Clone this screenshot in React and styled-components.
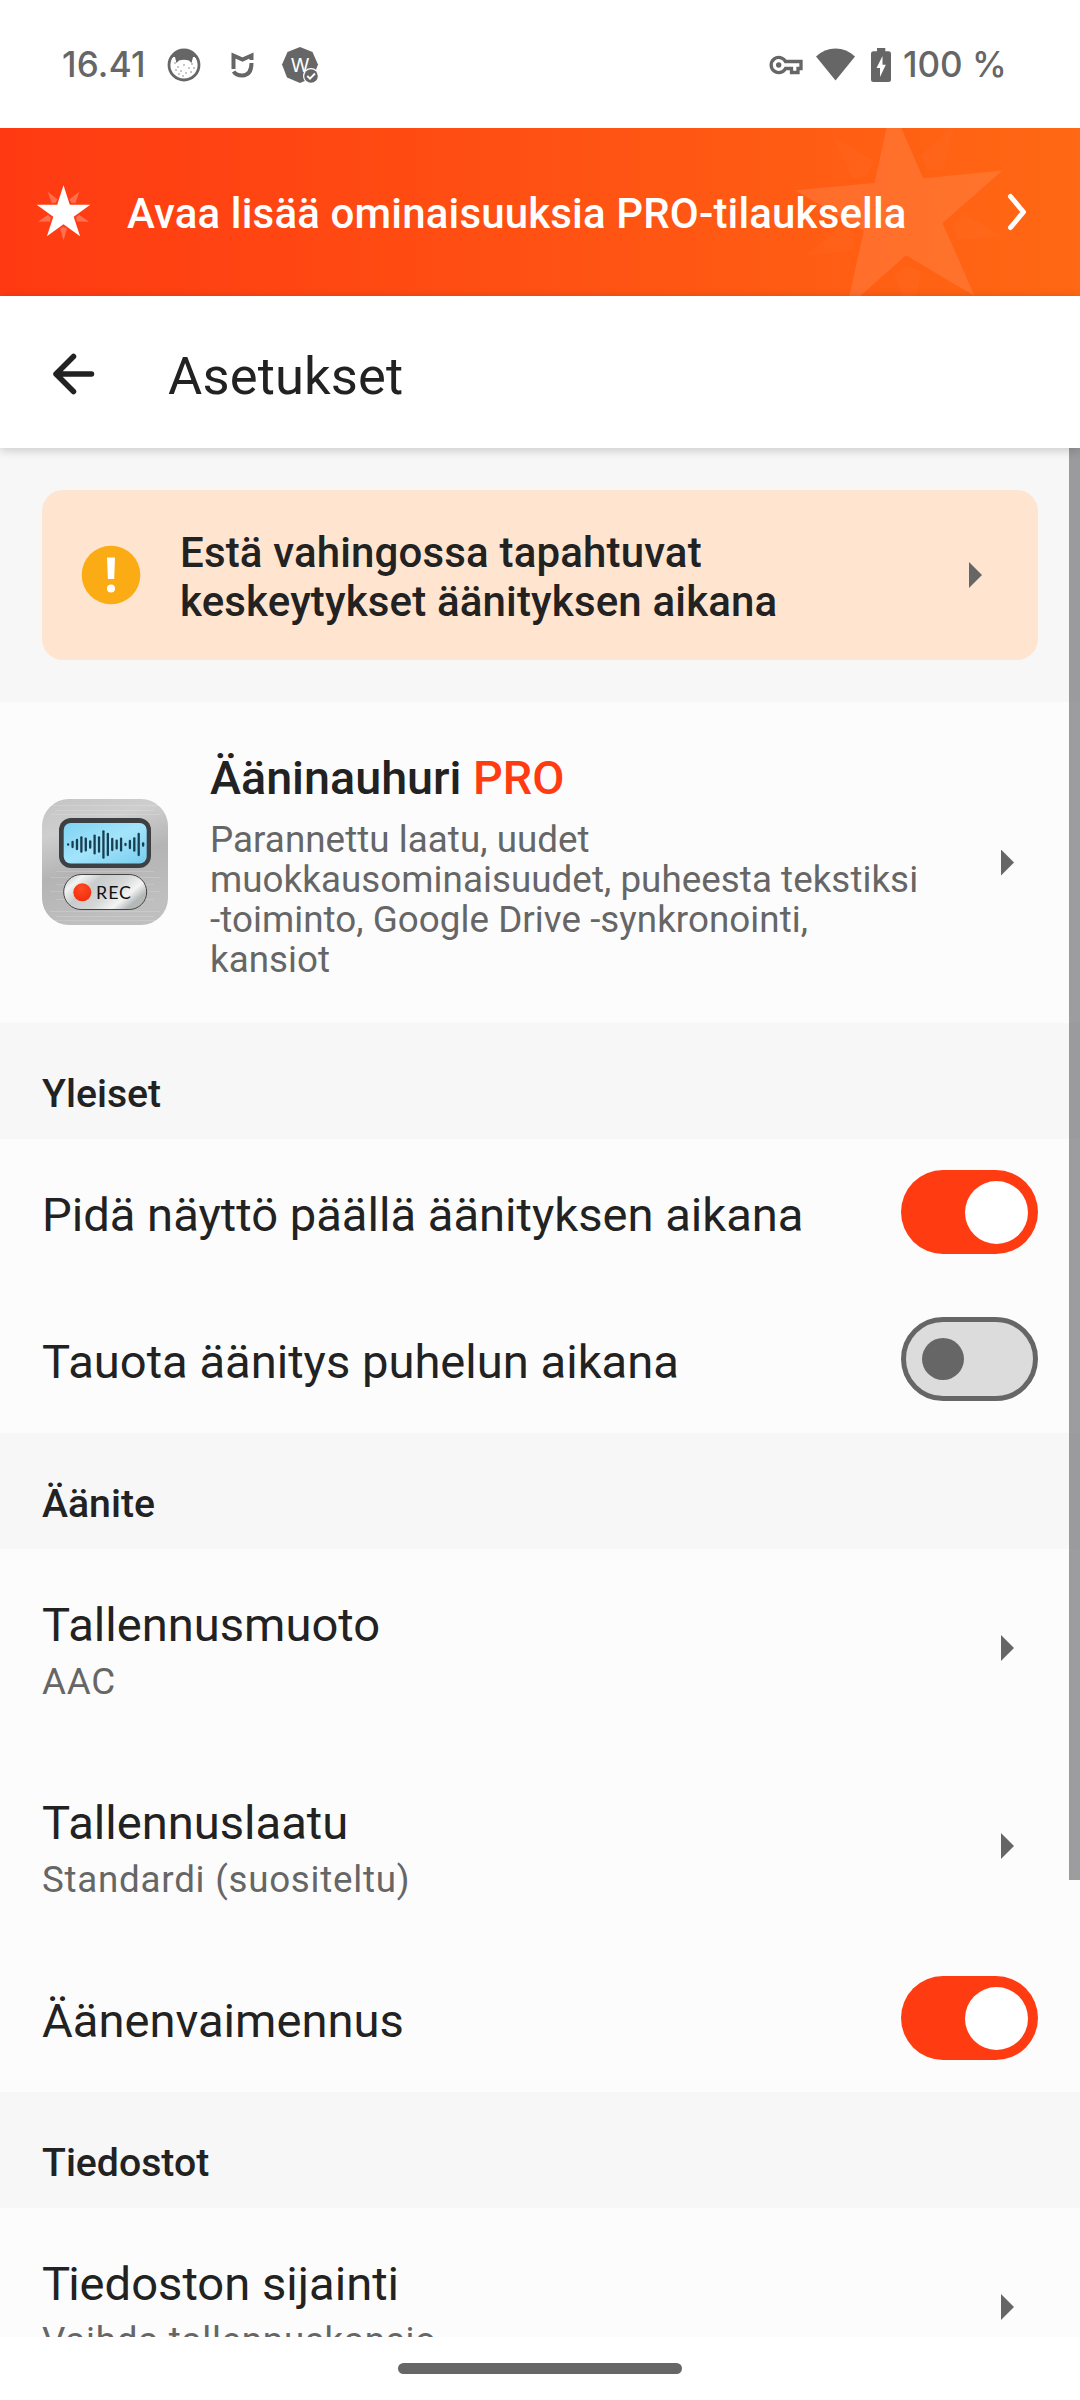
import React from "react";
import styled, { createGlobalStyle, css } from "styled-components";

const colors = {
  accent: "#ff3b12",
  ink: "#222222",
  muted: "#666666",
  surface: "#fcfcfc",
  canvas: "#f7f7f7",
};

const GlobalStyle = createGlobalStyle`
  *, *::before, *::after { box-sizing: border-box; }
  body { margin: 0; background: #fff; }
  svg { display: block; flex: none; }
`;

const Screen = styled.div`
  width: 1080px;
  height: 2400px;
  display: flex;
  flex-direction: column;
  overflow: hidden;
  background: #fff;
  color: ${colors.ink};
  font-family: Roboto, sans-serif;
`;

const StatusBar = styled.header`
  flex: none;
  height: 128px;
  padding: 1px 76px 0 62px;
  display: flex;
  align-items: center;
  justify-content: space-between;
  color: ${colors.muted};
  font: 500 35px/40px Inter, sans-serif;
`;

const StatusGroup = styled.div`
  display: flex;
  align-items: center;
`;

const Clock = styled.span`
  width: 106px;
  padding-bottom: 1px;
  letter-spacing: 0.2px;
`;

const BatteryLevel = styled.span`
  width: 101px;
  margin-left: 12px;
  padding-bottom: 2px;
  white-space: nowrap;
`;

const StatusIcon = styled.span`
  margin-left: ${(p) => p.$gap}px;
`;

const Banner = styled.button`
  position: relative;
  flex: none;
  height: 168px;
  border: 0;
  padding: 0 52px 0 35px;
  display: flex;
  align-items: center;
  overflow: hidden;
  color: #fff;
  text-align: left;
  background: linear-gradient(90deg, #ff3a12, #ff6814);
  font: 500 42px/50px Roboto, sans-serif;
  letter-spacing: 0.16px;
`;

const BannerStar = styled.svg`
  position: absolute;
  left: 782px;
  top: -34px;
`;

const StarMark = styled.svg`
  margin-top: 3px;
`;

const BannerText = styled.span`
  position: relative;
  flex: 1;
  padding: 3px 0 0 34px;
  white-space: nowrap;
`;

const BannerChevron = styled.svg`
  position: relative;
`;

const Toolbar = styled.div`
  position: relative;
  z-index: 2;
  flex: none;
  height: 152px;
  padding: 0 50px;
  display: flex;
  align-items: center;
  gap: 70px;
  background: #fff;
  box-shadow: 0 2px 10px rgba(0, 0, 0, 0.2);
`;

const Title = styled.h1`
  margin: 0;
  padding-top: 8px;
  font-weight: 400;
  font-size: 52.5px;
  line-height: 62px;
  letter-spacing: 0.15px;
`;

const BackArrow = styled.svg`
  margin-top: 4px;
`;

const Content = styled.main`
  position: relative;
  flex: none;
  height: 1889px;
  overflow: hidden;
  background: ${colors.surface};
`;

const ScrollThumb = styled.div`
  position: absolute;
  top: 0;
  right: 0;
  width: 11px;
  height: 1432px;
  background: rgba(93, 91, 97, 0.6);
`;

const NoticeArea = styled.div`
  height: 254px;
  padding: 42px;
  background: ${colors.canvas};
`;

const Notice = styled.div`
  height: 170px;
  padding: 0 56px 0 39px;
  border-radius: 21px;
  background: #ffe5cf;
  display: flex;
  align-items: center;
`;

const NoticeText = styled.p`
  flex: 1;
  margin: 0;
  padding: 3px 100px 0 39px;
  font-weight: 500;
  font-size: 42px;
  line-height: 49px;
  letter-spacing: 0.16px;
`;

const Arrow = styled.i`
  flex: none;
  width: 13px;
  height: 26px;
  background: ${colors.muted};
  clip-path: polygon(0 0, 100% 50%, 0 100%);
`;

const Row = styled.div`
  height: ${(p) => p.$height}px;
  padding: 0 ${(p) => (p.$link ? 66 : 42)}px 0 42px;
  display: flex;
  align-items: center;
  background: ${colors.surface};
`;

const RowText = styled.div`
  flex: 1;
  min-width: 0;
  padding-top: ${(p) => p.$shift}px;
`;

const RowTitle = styled.div`
  font-size: 47.150px;
  line-height: 56px;
  white-space: nowrap;
  ${(p) =>
    p.$kern &&
    css`
      &::first-letter {
        letter-spacing: -2px;
      }
    `}
  ${(p) =>
    p.$strong &&
    css`
      font-size: 46.7px;
      font-weight: 500;
    `}
`;

const Pro = styled.span`
  color: ${colors.accent};
`;

const RowValue = styled.div`
  color: ${colors.muted};
  font-size: 36.75px;
  line-height: 57px;
  letter-spacing: 0.74px;
  white-space: nowrap;
`;

const ProRow = styled(Row)`
  ${RowText} {
    align-self: flex-start;
    padding: 48px 60px 0 42px;
  }
`;

const ProDescription = styled.p`
  margin: 14px 0 0;
  width: 740px;
  color: ${colors.muted};
  font-size: 36.75px;
  line-height: 40px;
  letter-spacing: 0.05px;
`;

const SectionHeader = styled.h2`
  margin: 0;
  height: 116px;
  padding: 48px 42px 0;
  background: ${colors.canvas};
  font-weight: 500;
  font-size: 39.2px;
  line-height: 46px;
`;

const Track = styled.div`
  flex: none;
  width: 137px;
  height: 84px;
  margin-bottom: 1px;
  border-radius: 42px;
  display: flex;
  align-items: center;
  ${(p) =>
    p.$on
      ? css`
          justify-content: flex-end;
          padding-right: 10px;
          background: ${colors.accent};
        `
      : css`
          padding-left: 16px;
          border: 5px solid ${colors.muted};
          background: #dcdcdc;
        `}
`;

const Thumb = styled.div`
  width: ${(p) => (p.$on ? 63 : 42)}px;
  height: ${(p) => (p.$on ? 63 : 42)}px;
  border-radius: 50%;
  background: ${(p) => (p.$on ? "#fff" : colors.muted)};
`;

const NavBar = styled.footer`
  flex: 1;
  padding-top: 26px;
  display: flex;
  justify-content: center;
  background: #fff;
`;

const HomePill = styled.div`
  width: 284px;
  height: 11px;
  border-radius: 6px;
  background: ${colors.muted};
`;

const starPoints = Array.from({ length: 10 }, (_, i) => {
  const r = i % 2 ? 10.7 : 28.2;
  const a = (Math.PI / 5) * i - Math.PI / 2;
  return `${(r * Math.cos(a)).toFixed(2)},${(r * Math.sin(a)).toFixed(2)}`;
}).join(" ");

function Burst({ star, ray }) {
  return (
    <g fill="#fff">
      <polygon points={starPoints} opacity={star} />
      {[0, 72, 144, 216, 288].map((a) => (
        <polygon
          key={a}
          points="0,13.3 3.5,15.2 0,26.8 -3.5,15.2"
          transform={`rotate(${a})`}
          opacity={ray}
        />
      ))}
    </g>
  );
}

function CatIcon() {
  return (
    <svg width="34" height="34" viewBox="0 0 34 34">
      <circle cx="17" cy="17" r="15" fill="#fff" stroke="#666" strokeWidth="2.8" />
      <path
        d="M3.500 12 Q7 3 17 2.500 Q27 3 30.500 12 L28 9 L26 9 L24.500 15 L22 12.500 Q17 11 12 12.500 L9.500 15 L8 9 L6 9 Z"
        fill="#666"
      />
      {[
        [11, 19], [17, 17], [22, 20], [8, 15], [14, 23], [19, 25], [25, 16], [9, 22], [24, 24], [16, 28], [27, 20], [12, 26],
      ].map(([x, y]) => (
        <circle key={`${x}-${y}`} cx={x} cy={y} r="0.7" fill="#666" />
      ))}
    </svg>
  );
}

function MiHomeIcon() {
  return (
    <svg width="23" height="26" viewBox="0 0 23 26" fill="none" stroke="#666" strokeWidth="4">
      <path d="M2.500 17 V3.500 L11.500 7.500 L20.500 3.500 V8" />
      <path d="M2.600 19.500 Q5 23.500 11.300 23.500 Q20.500 23 20.500 11" />
    </svg>
  );
}

function WorkBadgeIcon() {
  return (
    <svg width="38" height="38" viewBox="0 0 38 38">
      <path d="M19 1 L31.500 6 L37 18.500 L32 31.500 L19 37 L6 31.500 L1 18.500 L6.500 6 Z" fill="#666" />
      <text x="19" y="25.500" textAnchor="middle" fontFamily="Inter, sans-serif" fontSize="19" fontWeight="400" fill="#fff">
        W
      </text>
      <circle cx="30" cy="30" r="8" fill="#fff" />
      <circle cx="30" cy="30" r="6.800" fill="#666" />
      <path d="M26.300 30 L29 32.700 L34 27.500" fill="none" stroke="#fff" strokeWidth="1.900" />
    </svg>
  );
}

function KeyIcon() {
  return (
    <svg width="34" height="20" viewBox="0 0 34 20" fill="none" stroke="#666">
      <path
        d="M16.500 6.500 H32 V13.500 H29 V17.500 H22.500 V13.500 H16.500 A7.600 7.600 0 1 1 16.500 6.500 Z"
        strokeWidth="3.300"
      />
      <circle cx="9.700" cy="10" r="2.700" fill="#666" stroke="none" />
    </svg>
  );
}

function WifiIcon() {
  return (
    <svg width="39" height="33" viewBox="0 0 39 33">
      <path d="M0 8.500 Q8.500 0.500 19.500 0.500 Q30.500 0.500 39 8.500 L19.500 32.500 Z" fill="#666" />
    </svg>
  );
}

function BatteryIcon() {
  return (
    <svg width="20" height="34" viewBox="0 0 20 34">
      <path
        d="M6 0 H14.300 V3.200 H17.500 Q20 3.200 20 5.700 V31.500 Q20 34 17.500 34 H2.500 Q0 34 0 31.500 V5.700 Q0 3.200 2.500 3.200 H6 Z"
        fill="#666"
      />
      <path d="M11.500 8 L5.500 20 H9 V29 L14.800 16.800 H11.500 Z" fill="#fff" />
    </svg>
  );
}

const WAVE = [8, 22, 34, 50, 42, 26, 60, 50, 86, 70, 40, 30, 42, 10, 28, 44, 70, 14];

const AppIcon = styled.svg`
  margin-bottom: 1px;
`;

function RecorderIcon() {
  return (
    <AppIcon width="126" height="126" viewBox="0 0 126 126">
      <defs>
        <linearGradient id="metal" x1="0" y1="0" x2="0.3" y2="1">
          <stop offset="0" stopColor="#c4c4c4" />
          <stop offset="0.28" stopColor="#cecece" />
          <stop offset="0.6" stopColor="#b4b4b4" />
          <stop offset="1" stopColor="#bfbfbf" />
        </linearGradient>
        <linearGradient id="lcd" x1="0" y1="0" x2="1" y2="1">
          <stop offset="0" stopColor="#7fd3f2" />
          <stop offset="0.5" stopColor="#a3e4fb" />
          <stop offset="1" stopColor="#78cdee" />
        </linearGradient>
        <linearGradient id="pill" x1="0" y1="0" x2="1" y2="0.5">
          <stop offset="0" stopColor="#b9bcbc" />
          <stop offset="0.2" stopColor="#f2f3f3" />
          <stop offset="0.4" stopColor="#c9cccc" />
          <stop offset="0.65" stopColor="#d6d8d8" />
          <stop offset="0.85" stopColor="#f4f4f4" />
          <stop offset="1" stopColor="#b5b8b8" />
        </linearGradient>
        <radialGradient id="dot" cx="0.45" cy="0.3" r="0.75">
          <stop offset="0" stopColor="#ff4b22" />
          <stop offset="1" stopColor="#f22a0c" />
        </radialGradient>
      </defs>
      <rect width="126" height="126" rx="27" fill="url(#metal)" />
      {[6, 11, 15, 72, 78, 85, 92, 100, 112, 117, 121].map((y, i) => (
        <rect key={y} x={i % 2 ? 14 : 8} y={y} width={i % 2 ? 98 : 110} height="1" fill="#fff" opacity="0.16" />
      ))}
      <rect x="17" y="19" width="92" height="50" rx="12" fill="#3d4042" />
      <rect x="21.700" y="24" width="83" height="40.500" rx="7" fill="url(#lcd)" />
      {WAVE.map((h, i) => (
        <rect
          key={i}
          x={25 + i * 4.41}
          y={45.5 - h / 6}
          width="2.300"
          height={h / 3}
          rx="1.100"
          fill="#163f52"
        />
      ))}
      <rect x="21.700" y="75.500" width="83" height="35" rx="17.500" fill="url(#pill)" stroke="#444" strokeWidth="1" />
      <circle cx="40.300" cy="93.300" r="9" fill="url(#dot)" />
      <text x="54" y="99.800" fontFamily="Lato, sans-serif" fontSize="17.800" fill="#111" textLength="35">
        REC
      </text>
    </AppIcon>
  );
}

function Toggle({ on }) {
  return (
    <Track $on={on} role="switch" aria-checked={on}>
      <Thumb $on={on} />
    </Track>
  );
}

function ToggleRow({ title, on }) {
  return (
    <Row $height={147}>
      <RowText $shift={5}>
        <RowTitle $kern={title.startsWith("T")}>{title}</RowTitle>
      </RowText>
      <Toggle on={on} />
    </Row>
  );
}

function LinkRow({ title, value }) {
  return (
    <Row $height={198} $link>
      <RowText $shift={11}>
        <RowTitle $kern={title.startsWith("T")}>{title}</RowTitle>
        <RowValue>{value}</RowValue>
      </RowText>
      <Arrow />
    </Row>
  );
}

export default function App() {
  return (
    <Screen>
      <GlobalStyle />
      <StatusBar>
        <StatusGroup>
          <Clock>16.41</Clock>
          <StatusIcon $gap={-1}><CatIcon /></StatusIcon>
          <StatusIcon $gap={30}><MiHomeIcon /></StatusIcon>
          <StatusIcon $gap={27}><WorkBadgeIcon /></StatusIcon>
        </StatusGroup>
        <StatusGroup>
          <KeyIcon />
          <StatusIcon $gap={13}><WifiIcon /></StatusIcon>
          <StatusIcon $gap={16}><BatteryIcon /></StatusIcon>
          <BatteryLevel>100 %</BatteryLevel>
        </StatusGroup>
      </StatusBar>

      <Banner>
        <BannerStar width="240" height="240" viewBox="-120 -120 240 240">
          <g transform="rotate(-5.500) scale(3.880)">
            <Burst star={0.1} ray={0.025} />
          </g>
        </BannerStar>
        <StarMark width="58" height="58" viewBox="-28.500 -28.500 58 58">
          <Burst star={1} ray={0.26} />
        </StarMark>
        <BannerText>Avaa lisää ominaisuuksia PRO-tilauksella</BannerText>
        <BannerChevron width="21" height="38" viewBox="0 0 21 38" fill="none" stroke="#fff" strokeWidth="5" strokeLinecap="round" strokeLinejoin="round">
          <path d="M3.500 3.500 L16.500 19 L3.500 34.500" />
        </BannerChevron>
      </Banner>

      <Toolbar>
        <BackArrow width="48" height="48" viewBox="0 0 48 48" fill="none" stroke={colors.ink} strokeWidth="5.500" strokeLinecap="round" strokeLinejoin="round">
          <path d="M41.500 24 H6 M23.500 6.500 L6 24 L23.500 41.500" />
        </BackArrow>
        <Title>Asetukset</Title>
      </Toolbar>

      <Content>
        <NoticeArea>
          <Notice>
            <svg width="60" height="60" viewBox="0 0 60 60">
              <circle cx="30" cy="30" r="29.300" fill="#fbab14" />
              <path d="M26 12.500 H34 L33.200 34 H26.900 Z" fill="#fff" />
              <circle cx="30" cy="43.500" r="4" fill="#fff" />
            </svg>
            <NoticeText>
              Estä vahingossa tapahtuvat
              <br />
              keskeytykset äänityksen aikana
            </NoticeText>
            <Arrow />
          </Notice>
        </NoticeArea>

        <ProRow $height={321} $link>
          <RecorderIcon />
          <RowText>
            <RowTitle $strong>
              Ääninauhuri <Pro>PRO</Pro>
            </RowTitle>
            <ProDescription>
              Parannettu laatu, uudet
              <br />
              muokkausominaisuudet, puheesta tekstiksi
              <br />
              -toiminto, Google Drive -synkronointi,
              <br />
              kansiot
            </ProDescription>
          </RowText>
          <Arrow />
        </ProRow>

        <SectionHeader>Yleiset</SectionHeader>
        <ToggleRow title="Pidä näyttö päällä äänityksen aikana" on />
        <ToggleRow title="Tauota äänitys puhelun aikana" on={false} />

        <SectionHeader>Äänite</SectionHeader>
        <LinkRow title="Tallennusmuoto" value="AAC" />
        <LinkRow title="Tallennuslaatu" value="Standardi (suositeltu)" />
        <ToggleRow title="Äänenvaimennus" on />

        <SectionHeader>Tiedostot</SectionHeader>
        <LinkRow title="Tiedoston sijainti" value="Vaihda tallennuskansio" />

        <ScrollThumb />
      </Content>

      <NavBar>
        <HomePill />
      </NavBar>
    </Screen>
  );
}
